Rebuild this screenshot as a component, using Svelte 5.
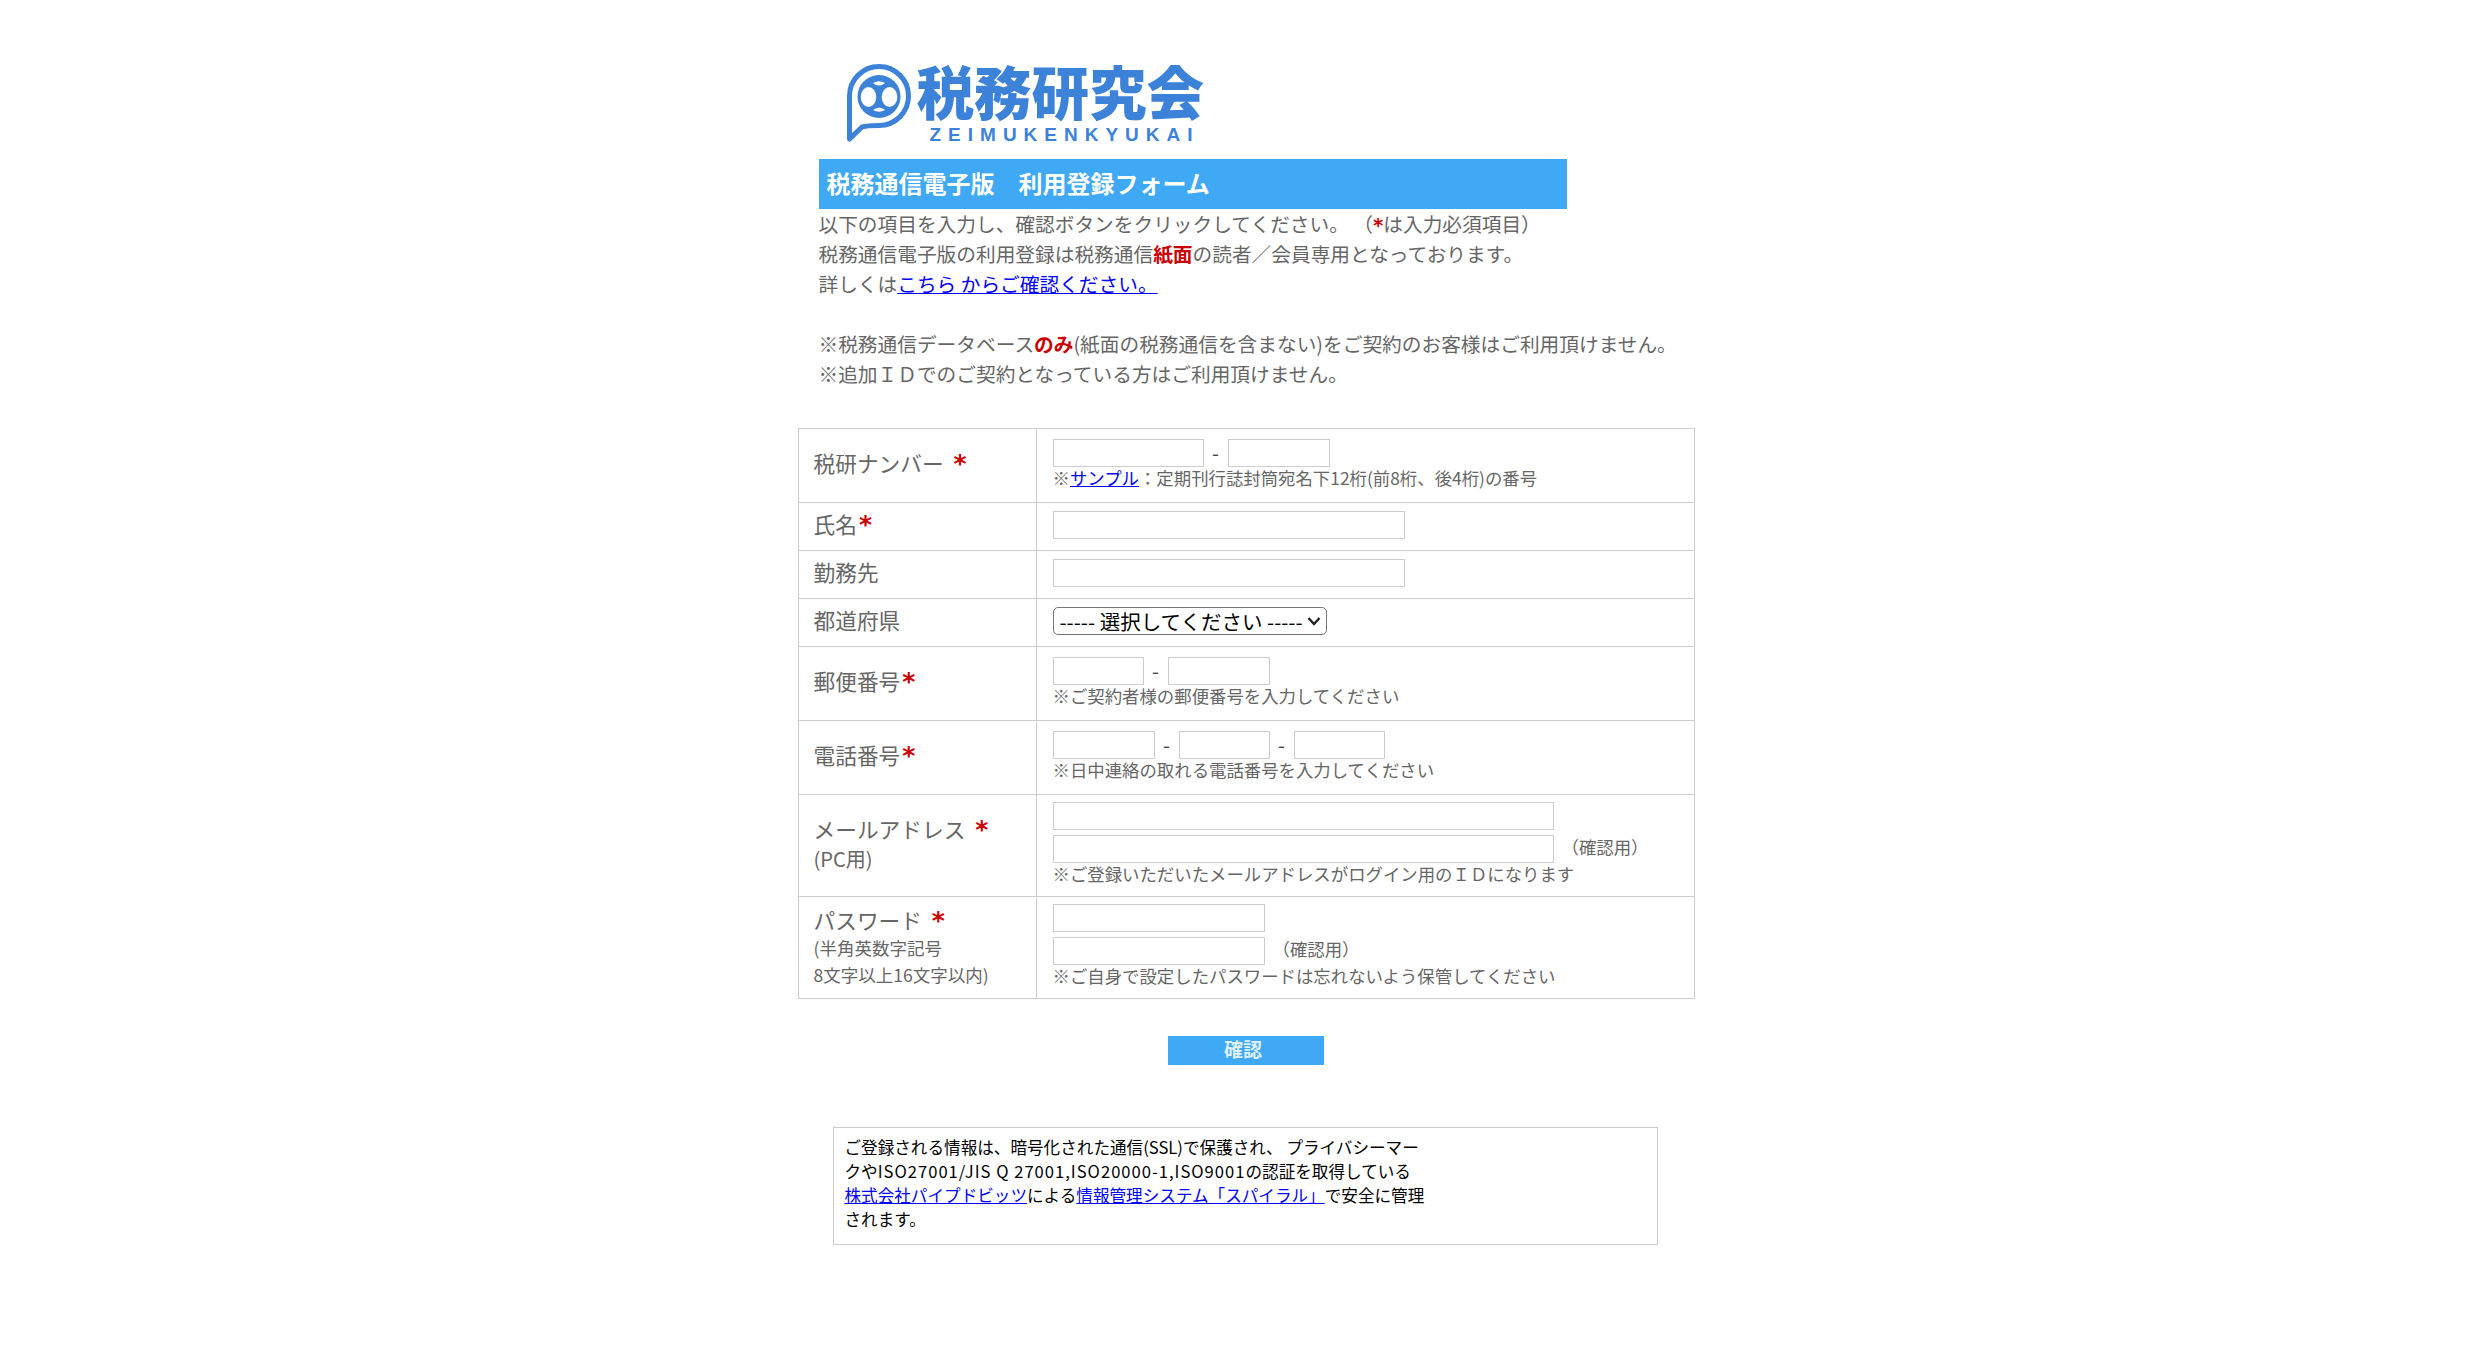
<script>
	const rows = [
		{ label: '氏名', width: 352 },
		{ label: '勤務先', width: 352, optional: true }
	];
</script>

<main class="page">
	<div class="logo">
		<svg class="logo-mark" viewBox="0 0 66 84" aria-hidden="true">
			<path class="ring" d="M3.5 77 V34 A29.5 29.5 0 1 1 33 63.5 C26 63.5 21 63.5 16 65 Z" />
			<circle class="disc" cx="33" cy="34.5" r="21.5" />
			<ellipse class="cut" cx="22.5" cy="35" rx="7.8" ry="10" />
			<ellipse class="cut" cx="43.5" cy="35" rx="7.8" ry="10" />
			<path class="cut" d="M27 21 Q33 17.5 39 21 Q33 26 27 21 Z" />
			<path class="cut" d="M27 48 Q33 43 39 48 Q33 51.5 27 48 Z" />
		</svg>
		<div class="logo-text">
			<div class="logo-name">税務研究会</div>
			<div class="logo-sub">ZEIMUKENKYUKAI</div>
		</div>
	</div>

	<h1 class="banner">税務通信電子版　利用登録フォーム</h1>

	<div class="intro">
		<p>以下の項目を入力し、確認ボタンをクリックしてください。 （<b class="req">*</b>は入力必須項目）</p>
		<p>税務通信電子版の利用登録は税務通信<b class="red">紙面</b>の読者／会員専用となっております。</p>
		<p>詳しくは<a href="#top">こちら からご確認ください。</a></p>
		<p class="gap">※税務通信データベース<b class="red">のみ</b>(紙面の税務通信を含まない)をご契約のお客様はご利用頂けません。</p>
		<p>※追加ＩＤでのご契約となっている方はご利用頂けません。</p>
	</div>

	<table class="form">
		<tbody>
			<tr class="tall">
				<th>税研ナンバー <b class="req">*</b></th>
				<td>
					<div class="fields">
						<input class="w152" type="text" /><span class="dash">-</span><input class="w102" type="text" />
					</div>
					<div class="note">※<a href="#top">サンプル</a>：定期刊行誌封筒宛名下12桁(前8桁、後4桁)の番号</div>
				</td>
			</tr>
			{#each rows as row}
				<tr>
					<th>{row.label}{#if !row.optional}<b class="req">*</b>{/if}</th>
					<td><input type="text" style="width: {row.width}px" /></td>
				</tr>
			{/each}
			<tr>
				<th>都道府県</th>
				<td>
					<div class="select" role="combobox" aria-expanded="false" aria-controls="pref" tabindex="0">
						<span id="pref">----- 選択してください -----</span>
						<svg class="chevron" viewBox="0 0 14 10" aria-hidden="true">
							<path d="M1.5 2 L7 8 L12.5 2" />
						</svg>
					</div>
				</td>
			</tr>
			<tr class="tall">
				<th>郵便番号<b class="req">*</b></th>
				<td>
					<div class="fields">
						<input class="w92" type="text" /><span class="dash">-</span><input class="w102" type="text" />
					</div>
					<div class="note">※ご契約者様の郵便番号を入力してください</div>
				</td>
			</tr>
			<tr class="tall">
				<th>電話番号<b class="req">*</b></th>
				<td>
					<div class="fields">
						<input class="w102" type="text" /><span class="dash">-</span><input class="w92" type="text" /><span class="dash">-</span><input class="w92" type="text" />
					</div>
					<div class="note">※日中連絡の取れる電話番号を入力してください</div>
				</td>
			</tr>
			<tr class="taller">
				<th>
					<div class="label">メールアドレス <b class="req">*</b></div>
					<div class="sub-pc">(PC用)</div>
				</th>
				<td>
					<div class="stack"><input class="w501" type="text" /></div>
					<div class="stack"><input class="w501" type="text" /><span class="confirm">（確認用）</span></div>
					<div class="note">※ご登録いただいたメールアドレスがログイン用のＩＤになります</div>
				</td>
			</tr>
			<tr class="taller">
				<th>
					<div class="label">パスワード <b class="req">*</b></div>
					<div class="sub">(半角英数字記号</div>
					<div class="sub">8文字以上16文字以内)</div>
				</th>
				<td>
					<div class="stack"><input class="w212" type="text" /></div>
					<div class="stack"><input class="w212" type="text" /><span class="confirm">（確認用）</span></div>
					<div class="note">※ご自身で設定したパスワードは忘れないよう保管してください</div>
				</td>
			</tr>
		</tbody>
	</table>

	<div class="actions">
		<button type="button">確認</button>
	</div>

	<div class="notice">
		ご登録される情報は、暗号化された通信(SSL)で保護され、 プライバシーマー<br />
		クや<span class="latin">ISO27001/JIS Q 27001,ISO20000-1,ISO9001</span>の認証を取得している<br />
		<a href="#top">株式会社パイプドビッツ</a>による<a href="#top">情報管理システム「スパイラル」</a>で安全に管理<br />
		されます。
	</div>
</main>

<style>
	:global(body) {
		margin: 0;
		background: #fff;
	}

	.page {
		width: 897px;
		margin: 0 auto;
		padding-top: 56px;
		font-family: "Noto Sans CJK JP", "Noto Sans", sans-serif;
		color: #666;
		font-size: 19.7px;
		line-height: 30px;
	}

	.logo {
		display: flex;
		align-items: flex-start;
		gap: 5px;
		height: 103px;
		margin-left: 48px;
	}

	.logo-mark {
		width: 66px;
		height: 84px;
		margin-top: 6px;
	}

	.ring {
		fill: none;
		stroke: #3b82d8;
		stroke-width: 5;
		stroke-linejoin: round;
	}

	.disc {
		fill: #3b82d8;
	}

	.cut {
		fill: #fff;
	}

	.logo-name {
		margin-top: 3px;
		font-size: 57.5px;
		line-height: 62px;
		font-weight: 900;
		color: #3b82d8;
	}

	.logo-sub {
		font-family: "Liberation Sans", sans-serif;
		font-weight: 700;
		font-size: 19px;
		line-height: 24px;
		letter-spacing: 7px;
		margin: 2px 0 0 13px;
		color: #3b82d8;
	}

	.banner {
		width: 748px;
		height: 50px;
		margin: 0 0 0 21px;
		padding: 0 8px;
		box-sizing: border-box;
		background: #3fa9f5;
		color: #fff;
		font-size: 24px;
		font-weight: 700;
		line-height: 48px;
	}

	.intro {
		margin-left: 21px;
		width: 876px;
	}

	.intro p {
		margin: 0;
	}

	.intro .gap {
		margin-top: 30px;
	}

	a {
		color: #00f;
	}

	.req,
	.red {
		color: #c00;
	}

	.req {
		font-family: "DejaVu Sans", sans-serif;
		line-height: 0;
	}

	.form {
		width: 897px;
		margin-top: 39px;
		border-collapse: collapse;
		table-layout: fixed;
	}

	.form tr {
		height: 48px;
	}

	.form .tall {
		height: 74px;
	}

	.form .taller {
		height: 102px;
	}

	.form th,
	.form td {
		border: 1px solid #ccc;
		vertical-align: middle;
		text-align: left;
		font-weight: 400;
	}

	.form th {
		width: 222px;
		padding: 0 0 5px 15px;
		font-size: 21.7px;
		line-height: 32px;
		word-spacing: 3px;
	}

	.form th .req {
		margin-left: 2px;
		font-size: 1.15em;
	}

	.form .taller th {
		padding-bottom: 3px;
	}

	.form td {
		padding: 0 14px 3px 16px;
		font-size: 17.4px;
		line-height: 22px;
	}

	.form .taller td {
		padding-bottom: 5px;
	}

	.fields {
		display: flex;
		align-items: center;
	}

	.dash {
		width: 24px;
		text-align: center;
		font-size: 20px;
		color: #444;
	}

	input {
		display: block;
		box-sizing: border-box;
		width: 352px;
		height: 28px;
		margin: 0;
		padding: 0 4px;
		background: #fff;
		border: 1px solid #ccc;
		border-radius: 0;
	}

	.w92 { width: 91px; }
	.w102 { width: 102px; }
	.w152 { width: 151px; }
	.w212 { width: 212px; }
	.w501 { width: 501px; }

	.select {
		display: flex;
		align-items: center;
		justify-content: space-between;
		box-sizing: border-box;
		width: 274px;
		height: 28px;
		padding: 0 5px 0 6px;
		font-size: 20.5px;
		line-height: 26px;
		color: #000;
		background: #fff;
		border: 1px solid #767676;
		border-radius: 5px;
		white-space: nowrap;
	}

	.chevron {
		width: 14px;
		height: 10px;
		flex: none;
		fill: none;
		stroke: #222;
		stroke-width: 2.4;
	}

	.stack {
		display: flex;
		align-items: center;
		margin-bottom: 5px;
	}

	.stack + .stack {
		margin-bottom: 0;
	}

	.confirm {
		margin: 0 0 3px 8px;
	}

	.label {
		line-height: 29px;
	}

	.sub,
	.sub-pc {
		font-size: 17.5px;
		line-height: 27px;
	}

	.sub-pc {
		font-size: 20px;
		line-height: 32px;
	}

	.actions {
		margin-top: 37px;
		display: flex;
		justify-content: center;
	}

	button {
		width: 156px;
		height: 29px;
		padding: 0 6px 4px 0;
		border: none;
		background: #3fa9f5;
		color: #dff0fd;
		font: inherit;
		font-size: 19px;
		font-weight: 700;
		line-height: 25px;
	}

	.notice {
		box-sizing: border-box;
		width: 825px;
		height: 118px;
		margin: 62px 0 0 35px;
		padding: 7px 11px;
		border: 1px solid #ccc;
		color: #000;
		font-size: 16.6px;
		line-height: 24px;
	}

	.latin {
		letter-spacing: 1px;
	}
</style>
